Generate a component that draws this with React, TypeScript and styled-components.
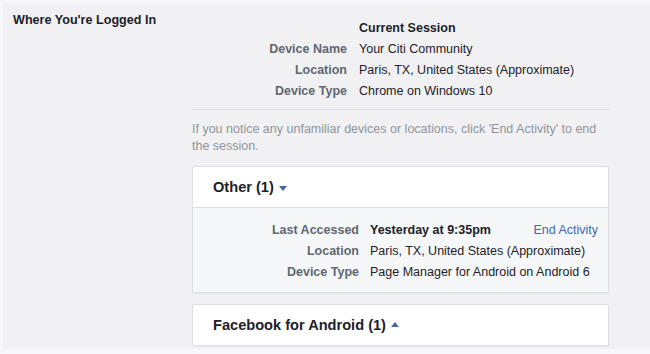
import styled, { createGlobalStyle } from 'styled-components';

const GlobalStyle = createGlobalStyle`
  html, body {
    margin: 0;
    padding: 0;
    background: #f8f8fa;
    font-family: 'Liberation Sans', Arial, Helvetica, sans-serif;
    -webkit-font-smoothing: antialiased;
  }
`;

const Panel = styled.div`
  margin: 3px 0 0 3px;
  height: 346px;
  background: #f1f1f3;
  display: grid;
  grid-template-columns: 189px 417px;
  align-items: start;
  overflow: hidden;
`;

const SectionTitle = styled.h2`
  margin: 0;
  padding: 9px 0 0 10px;
  font-size: 12.6px;
  line-height: 16px;
  font-weight: bold;
  color: #1d2129;
`;

const Content = styled.div`
  padding-top: 15px;
  display: flex;
  flex-direction: column;
`;

const InfoTable = styled.div<{ $labelWidth: number; $gap: number }>`
  display: grid;
  grid-template-columns: ${({ $labelWidth }) => $labelWidth}px 1fr;
  column-gap: ${({ $gap }) => $gap}px;
  font-size: 12.5px;
  line-height: 21px;
`;

const Label = styled.span`
  text-align: right;
  font-weight: bold;
  color: #606770;
  white-space: nowrap;
`;

const Value = styled.span<{ $bold?: boolean }>`
  color: #1d2129;
  font-weight: ${({ $bold }) => ($bold ? 'bold' : 'normal')};
  white-space: nowrap;
`;

const ValueWithAction = styled.span`
  display: flex;
  justify-content: space-between;
  align-items: baseline;
`;

const ActionLink = styled.a`
  color: #4267b2;
  text-decoration: none;
  cursor: pointer;
`;

const Divider = styled.hr`
  margin: 7px 0 0;
  border: none;
  border-top: 1px solid #dadde1;
`;

const Notice = styled.p`
  margin: 11px 0 0;
  font-size: 12.5px;
  line-height: 17px;
  color: #90949c;
`;

const Card = styled.div<{ $first?: boolean }>`
  margin-top: ${({ $first }) => ($first ? 11 : 11)}px;
  background: #ffffff;
  border: 1px solid #dddfe2;
  border-radius: 2px;
  box-shadow: 0 1px 1px rgba(0, 0, 0, 0.04);
`;

const CardHeader = styled.div`
  height: 40px;
  display: flex;
  align-items: center;
  gap: 5px;
  padding-left: 20px;
  font-size: 14.6px;
  font-weight: bold;
  color: #1d2129;
`;

const Caret = styled.span<{ $up?: boolean }>`
  width: 0;
  height: 0;
  border-left: 4.5px solid transparent;
  border-right: 4.5px solid transparent;
  ${({ $up }) =>
    $up ? 'border-bottom: 5px solid #4b67a1;' : 'border-top: 5px solid #4b67a1;'}
  margin-top: ${({ $up }) => ($up ? '-1px' : '2px')};
`;

const CardBody = styled.div`
  background: #f6f7f9;
  border-top: 1px solid #dddfe2;
  padding: 12px 10px 9px 0;
`;

const App = () => {
  return (
    <>
      <GlobalStyle />
      <Panel>
        <SectionTitle>Where You're Logged In</SectionTitle>
        <Content>
          <InfoTable $labelWidth={155} $gap={12}>
            <span />
            <Value $bold>Current Session</Value>
            <Label>Device Name</Label>
            <Value>Your Citi Community</Value>
            <Label>Location</Label>
            <Value>Paris, TX, United States (Approximate)</Value>
            <Label>Device Type</Label>
            <Value>Chrome on Windows 10</Value>
          </InfoTable>
          <Divider />
          <Notice>
            If you notice any unfamiliar devices or locations, click 'End Activity' to end the
            session.
          </Notice>
          <Card $first>
            <CardHeader>
              Other (1) <Caret />
            </CardHeader>
            <CardBody>
              <InfoTable $labelWidth={166} $gap={11}>
                <Label>Last Accessed</Label>
                <ValueWithAction>
                  <Value $bold>Yesterday at 9:35pm</Value>
                  <ActionLink>End Activity</ActionLink>
                </ValueWithAction>
                <Label>Location</Label>
                <Value>Paris, TX, United States (Approximate)</Value>
                <Label>Device Type</Label>
                <Value>Page Manager for Android on Android 6</Value>
              </InfoTable>
            </CardBody>
          </Card>
          <Card>
            <CardHeader>
              Facebook for Android (1) <Caret $up />
            </CardHeader>
          </Card>
        </Content>
      </Panel>
    </>
  );
};

export default App;
